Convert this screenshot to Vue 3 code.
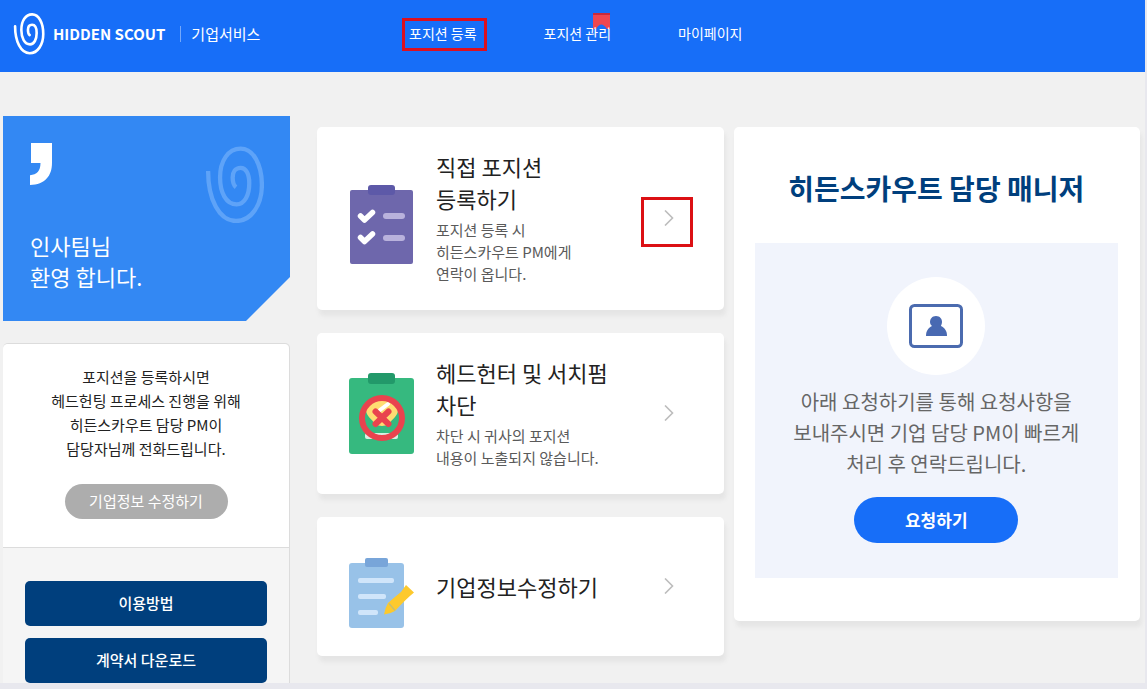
<script setup>
const swirl =
  'M12 75C12 160 45 226 96 226C142 226 174 178 174 118C174 55 148 8 110 8C72 8 48 45 48 95C48 140 66 176 98 176C122 176 136 148 136 112C136 84 126 66 110 66C94 66 86 78 86 95C86 108 88 118 96 124'

const cards = [
  { id: 'post', title: ['직접 포지션', '등록하기'], desc: ['포지션 등록 시', '히든스카우트 PM에게', '연락이 옵니다.'], marked: true },
  { id: 'block', title: ['헤드헌터 및 서치펌', '차단'], desc: ['차단 시 귀사의 포지션', '내용이 노출되지 않습니다.'] },
  { id: 'edit', title: ['기업정보수정하기'], desc: [] }
]
</script>

<template>
  <div class="page">
    <header class="header">
      <a class="brand" href="#">
        <svg class="brand-mark" viewBox="0 0 184 236" preserveAspectRatio="none" aria-hidden="true">
          <path :d="swirl" />
        </svg>
        <span class="brand-name">HIDDEN SCOUT</span>
        <span class="brand-sub">기업서비스</span>
      </a>
      <nav class="nav">
        <a class="nav-link marked" href="#">포지션 등록</a>
        <a class="nav-link" href="#">
          <svg class="ribbon" viewBox="0 0 17 16" aria-hidden="true">
            <path d="M0 0H17V16H14Q8 7 3 16H0Z" fill="#ee4650" />
            <path d="M0 0H17V2H0Z" fill="#c62a3c" />
          </svg>
          <span class="nav-text">포지션 관리</span>
        </a>
        <a class="nav-link" href="#">마이페이지</a>
      </nav>
    </header>

    <main class="main">
      <aside class="side">
        <section class="welcome">
          <div class="welcome-top">
            <svg class="quote" viewBox="0 0 65 128" preserveAspectRatio="none" aria-hidden="true">
              <path d="M3 0H65V60C65 100 45 126 0 128V98C20 97 31 85 31 61H3Z" fill="#fff" />
            </svg>
            <svg class="welcome-swirl" viewBox="0 0 180 232" aria-hidden="true">
              <path :d="swirl" />
            </svg>
          </div>
          <p class="welcome-text">인사팀님<br />환영 합니다.</p>
        </section>

        <section class="side-box">
          <div class="side-info">
            <p class="side-text">
              포지션을 등록하시면<br />헤드헌팅 프로세스 진행을 위해<br />히든스카우트 담당 PM이<br />담당자님께 전화드립니다.
            </p>
            <button class="pill" type="button">기업정보 수정하기</button>
          </div>
          <div class="side-actions">
            <button class="side-btn" type="button">이용방법</button>
            <button class="side-btn" type="button">계약서 다운로드</button>
          </div>
        </section>
      </aside>

      <div class="content">
        <div class="cards">
          <section v-for="card in cards" :key="card.id" class="card">
            <svg v-if="card.id === 'post'" class="card-icon" width="66" height="92" viewBox="0 0 66 92" aria-hidden="true">
              <rect x="1" y="18" width="63" height="74" rx="2" fill="#6e67ac" />
              <rect x="19" y="13" width="27" height="10" rx="3" fill="#5d59a8" />
              <g fill="none" stroke="#fff" stroke-width="5.500" stroke-linecap="round" stroke-linejoin="round">
                <path d="M11.500 44L15.500 48L23.500 40.500" />
                <path d="M11.500 65.500L15.500 69.500L23.500 62" />
              </g>
              <rect x="34" y="41" width="22" height="6" rx="3" fill="#b9b2dc" />
              <rect x="34" y="63" width="22" height="6" rx="3" fill="#b9b2dc" />
            </svg>
            <svg v-else-if="card.id === 'block'" class="card-icon" width="66" height="82" viewBox="0 0 66 82" aria-hidden="true">
              <rect x="0" y="6" width="65" height="76" rx="3" fill="#36b97f" />
              <rect x="19" y="1" width="27" height="11" rx="3" fill="#22996a" />
              <rect x="16" y="61" width="33" height="6" rx="2" fill="#d9efe3" />
              <path d="M17 38C17 31 24 28 33 28S49 31 49 38C49 44 43 47 40 52Q33 56 26 52C23 47 17 44 17 38Z" fill="#ffdc72" />
              <path d="M31 38L39 32" stroke="#fff" stroke-width="4" stroke-linecap="round" />
              <circle cx="33" cy="46" r="20" fill="none" stroke="#e9434e" stroke-width="6" />
              <path d="M26.500 39.500L39.500 52M39.500 39.500L26.500 52" stroke="#e9434e" stroke-width="6" stroke-linecap="round" />
            </svg>
            <svg v-else class="card-icon" width="66" height="84" viewBox="0 -2 66 84" aria-hidden="true">
              <rect x="0" y="17" width="55" height="65" rx="3" fill="#98c2e8" />
              <rect x="16" y="12" width="23" height="9" rx="2" fill="#78a5d9" />
              <g fill="#d0e5fa">
                <rect x="9" y="32" width="36" height="5" rx="2" />
                <rect x="9" y="48" width="28" height="5" rx="2" />
                <rect x="9" y="64" width="20" height="5" rx="2" />
              </g>
              <path d="M57 39L65 46.500Q57 53 46 65Q41 68 35 68.500Q36 62 39 57Q47 50 52 46Z" fill="#fdc92d" />
              <path d="M40 57.500L46 64.500" stroke="#c4bd75" stroke-width="1.200" />
            </svg>

            <div class="card-body">
              <h2 class="card-title">
                <span v-for="line in card.title" :key="line">{{ line }}</span>
              </h2>
              <p v-if="card.desc.length" class="card-desc">
                <span v-for="line in card.desc" :key="line">{{ line }}</span>
              </p>
            </div>

            <a class="go" :class="{ 'go-marked': card.marked }" href="#" :aria-label="card.title.join(' ')">
              <svg width="10" height="16" viewBox="0 0 10 16" aria-hidden="true">
                <path d="M1 0.500L8.500 8L1 15.500" fill="none" stroke="#bdbdbd" stroke-width="1.600" />
              </svg>
            </a>
          </section>
        </div>

        <section class="manager">
          <h2 class="manager-title">히든스카우트 담당 매니저</h2>
          <div class="manager-panel">
            <div class="avatar">
              <svg width="54" height="44" viewBox="0 0 54 44" aria-hidden="true">
                <rect x="1.500" y="1.500" width="51" height="41" rx="4" fill="none" stroke="#4b6baf" stroke-width="3" />
                <path d="M27 12C31 12 33 15 33 18C33 20 32 21 32 22C36 24 38 27 38 32H17C17 27 19 24 23 22C22 21 21 20 21 18C21 15 23 12 27 12Z" fill="#4869b2" />
              </svg>
            </div>
            <p class="manager-text">
              아래 요청하기를 통해 요청사항을<br />보내주시면 기업 담당 PM이 빠르게<br />처리 후 연락드립니다.
            </p>
            <button class="request" type="button">요청하기</button>
          </div>
        </section>
      </div>
    </main>
  </div>
</template>

<style>
body {
  margin: 0;
  background: #e8e8ee;
}
</style>

<style scoped>
.page,
.page * {
  box-sizing: border-box;
}
.page {
  display: flex;
  flex-direction: column;
  height: 100vh;
  border-right: 2px solid #e8e8ee;
  border-bottom: 6px solid #e8e8ee;
  background: #f1f1f1;
  color: #222;
  font-family: 'Noto Sans CJK KR', 'Noto Sans', sans-serif;
}
.page p,
.page h2 {
  margin: 0;
}
.page a {
  color: inherit;
  text-decoration: none;
}
.page button {
  border: 0;
  padding: 0 0 2px;
  color: #fff;
  font-family: inherit;
  cursor: pointer;
}
svg {
  display: block;
  flex: none;
}

/* header */
.header {
  display: flex;
  flex: none;
  align-items: center;
  height: 72px;
  padding: 0 13px 5px;
  background: #176ef8;
  color: #fff;
}
.brand {
  display: flex;
  align-items: center;
  width: 396px;
}
.brand-mark {
  width: 32px;
  height: 42px;
}
.brand-mark path {
  fill: none;
  stroke: #fff;
  stroke-width: 15;
  stroke-linecap: round;
}
.brand-name {
  margin-left: 8px;
  font-size: 15px;
  font-weight: 700;
  line-height: 16px;
}
.brand-sub {
  margin-left: 15px;
  padding-left: 10px;
  border-left: 1px solid #74a8fb;
  font-size: 15px;
  line-height: 16px;
}
.nav {
  display: flex;
  gap: 67px;
  padding-bottom: 2px;
}
.nav-link {
  position: relative;
  font-size: 14px;
  line-height: 20px;
}
.nav-text {
  position: relative;
}
.marked::after {
  content: '';
  position: absolute;
  inset: -5px -10px -8px -7px;
  border: 3px solid #dc1020;
}
.ribbon {
  position: absolute;
  top: -10px;
  right: 1px;
  width: 17px;
  height: 16px;
}

/* columns */
.main {
  display: grid;
  flex: 1;
  grid-template-columns: 287px minmax(0, 1fr);
  gap: 27px;
  align-items: start;
  min-height: 0;
  padding: 0 5px 0 3px;
  overflow: hidden;
}
.side {
  padding-top: 44px;
}
.content {
  display: grid;
  grid-template-columns: repeat(2, minmax(0, 1fr));
  gap: 10px;
  align-items: start;
  padding-top: 55px;
}
.cards {
  display: flex;
  flex-direction: column;
  gap: 23px;
}

/* sidebar */
.welcome {
  padding: 27px 26px 29px 27px;
  background: #3388f3;
  clip-path: polygon(0 0, 100% 0, 100% calc(100% - 44px), calc(100% - 44px) 100%, 0 100%);
  color: #fff;
}
.welcome-top {
  display: flex;
  align-items: flex-start;
  justify-content: space-between;
}
.quote {
  width: 22px;
  height: 42px;
}
.welcome-swirl {
  width: 60px;
  height: 77px;
  margin-top: 3px;
}
.welcome-swirl path {
  fill: none;
  stroke: #5ea3f8;
  stroke-width: 13;
}
.welcome-text {
  margin-top: 7px;
  padding-top: 7px;
  font-size: 22px;
  line-height: 31px;
}
.side-box {
  margin-top: 22px;
  border: 1px solid #dcdcdc;
  border-left: 0;
  border-radius: 5px;
  background: #f5f5f5;
}
.side-info {
  display: flex;
  flex-direction: column;
  align-items: center;
  padding: 21px 0 28px;
  border-bottom: 1px solid #dcdcdc;
  border-radius: 5px 5px 0 0;
  background: #fff;
}
.side-text {
  font-size: 15px;
  line-height: 24px;
  text-align: center;
}
.pill {
  width: 163px;
  height: 35px;
  margin-top: 23px;
  border-radius: 18px;
  background: #adadad;
  font-size: 15px;
}
.side-actions {
  display: flex;
  flex-direction: column;
  gap: 12px;
  padding: 33px 22px;
}
.side-btn {
  height: 45px;
  border-radius: 5px;
  background: #003f7d;
  font-size: 15px;
  font-weight: 500;
}

/* action cards */
.card,
.manager {
  border-radius: 5px;
  background: #fff;
  box-shadow: 2px 6px 4px #e5e5e5;
}
.card {
  display: flex;
  align-items: center;
  min-height: 139px;
  padding: 23px 50px 25px 32px;
}
.card-body {
  flex: 1;
  margin-left: 21px;
}
.card-title {
  font-size: 22px;
  font-weight: 400;
  line-height: 32px;
}
.card-title span,
.card-desc span {
  display: block;
}
.page .card-desc {
  margin-top: 5px;
  color: #5a5a5a;
  font-size: 15px;
  line-height: 22px;
}
.go {
  position: relative;
}
.go-marked::after {
  content: '';
  position: absolute;
  inset: -13px -19px -21px -23px;
  border: 3px solid #dc1014;
}

/* manager */
.manager {
  padding: 40px 22px 43px 21px;
}
.manager-title {
  color: #003f7d;
  font-size: 28px;
  font-weight: 700;
  line-height: 42px;
  text-align: center;
}
.manager-panel {
  display: flex;
  flex-direction: column;
  align-items: center;
  margin-top: 34px;
  padding: 34px 0 35px;
  background: #f1f4fc;
}
.avatar {
  display: grid;
  place-items: center;
  width: 98px;
  height: 98px;
  border-radius: 50%;
  background: #fff;
}
.page .manager-text {
  margin-top: 11px;
  color: #666;
  font-size: 20px;
  line-height: 31px;
  text-align: center;
}
.request {
  width: 164px;
  height: 46px;
  margin-top: 18px;
  border-radius: 23px;
  background: #176ef8;
  font-size: 17px;
  font-weight: 700;
}
</style>
